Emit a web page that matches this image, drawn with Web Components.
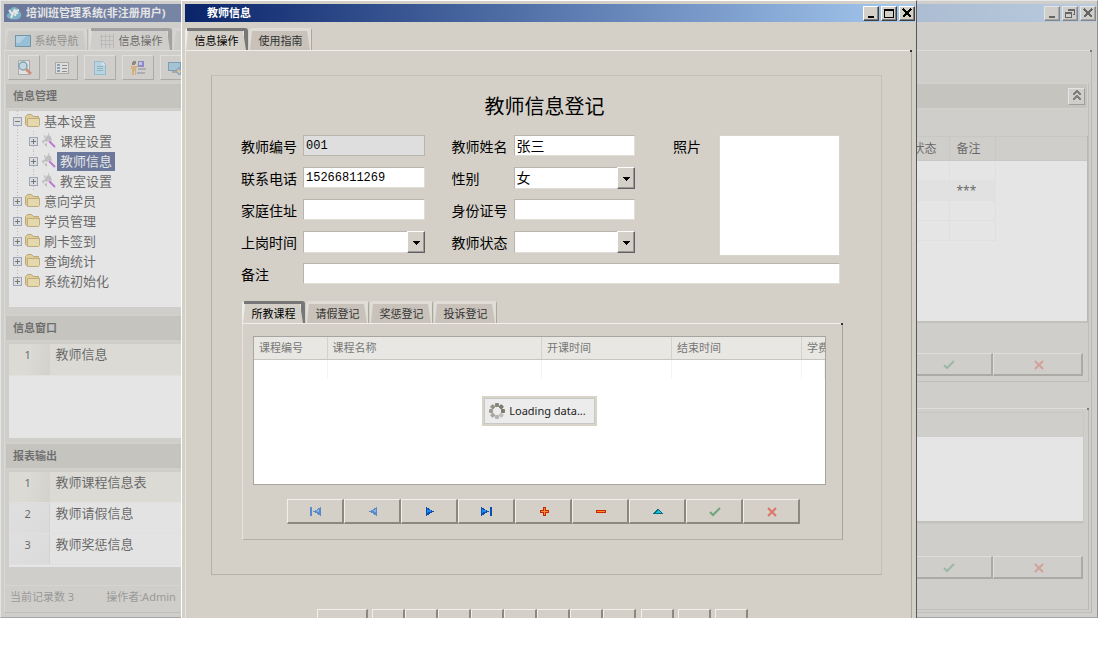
<!DOCTYPE html>
<html lang="zh-CN">
<head>
<meta charset="utf-8">
<title>培训班管理系统</title>
<style>
  body {
    margin: 0;
    background: #fff;
    color: #000;
    font: 11px/16px "Noto Sans", "Noto Sans CJK SC", sans-serif;
  }
</style>
</head>
<body>
<desk-top></desk-top>

<script>
const base = `
  * { box-sizing: border-box; }
  :host { display: block; box-sizing: border-box; }
  button, input, select { font: inherit; color: inherit; margin: 0; padding: 0; border-radius: 0; }
  button {
    display: flex;
    align-items: center;
    justify-content: center;
    background: #d4d0c8;
    border: 1px solid;
    border-color: #f2f0eb #8c8880 #8c8880 #f2f0eb;
  }
  table { border-collapse: collapse; table-layout: fixed; width: 100%; }
  th, td { padding: 0 6px; font-weight: normal; text-align: left; white-space: nowrap; overflow: hidden; }
`;

const define = (name, render) =>
  customElements.define(
    name,
    class extends HTMLElement {
      constructor() {
        super();
        this.attachShadow({ mode: "open" });
      }

      connectedCallback() {
        const [css, html] = render(this);
        this.shadowRoot.innerHTML = `<style>${base}${css}</style>${html}`;
      }
    }
  );

const icons = {
  first: `<g opacity=".6"><path fill="#0a5ec8" d="M2 4h2v9H2zM13 4v9L5 8.500z"/><path fill="#4fa3f5" d="M11 6v3L7 8z"/></g>`,
  prior: `<g opacity=".6"><path fill="#0a5ec8" d="M12 4v9L4 8.500z"/><path fill="#4fa3f5" d="M11 6v3L7 8z"/></g>`,
  next: `<path fill="#0a4fb0" d="M4 4v9l8-4.500z"/><path fill="#1e88f0" d="M5 6v4l5-2z"/>`,
  last: `<path fill="#0a4fb0" d="M2 4v9l8-4.500zM11 4h2v9h-2z"/><path fill="#1e88f0" d="M3 6v4l5-2z"/>`,
  add: `<path fill="#c82800" d="M7 4h3v3h3v3h-3v3H7v-3H4V7h3z"/><path fill="#ff8a30" d="M8 5h1v3h3v1H9v3H8V9H5V8h3z"/>`,
  remove: `<path fill="#c82800" d="M3 7h10v3H3z"/><path fill="#ff8a30" d="M4 8h8v1H4z"/>`,
  edit: `<path fill="#086a80" d="M8 5l5 6H3z"/><path fill="#18c4dc" d="M8 7l3 3H5z"/>`,
  post: `<path fill="none" stroke="#6da57c" stroke-width="2" d="M3 9l3 3 7-7"/>`,
  cancel: `<path fill="none" stroke="#dc7468" stroke-width="2" d="M4 5l8 8M12 5l-8 8"/>`,
  min: `<path d="M5 11h6v2H5z"/>`,
  max: `<path fill="none" stroke="#000" d="M3.500 4.500h9v8h-9z"/><path d="M3 4h10v2H3z"/>`,
  restore: `<path fill="none" stroke="#000" d="M6.500 6V4.500h6v5H11M3.500 7.500h6v5h-6z"/><path d="M6 4h7v2H6zM3 7h7v2H3z"/>`,
  close: `<path fill="none" stroke="#000" stroke-width="2" d="M4 4l8 8M12 4l-8 8"/>`,
  down: `<path d="M4 7h8l-4 4z"/>`,
  collapse: `<path fill="none" stroke="#333" stroke-width="1.500" d="M4 7l4-4 4 4M4 12l4-4 4 4"/>`,
  logo: `<path fill="#2c9bc0" d="M2 13q-3-3 1-5 0-5 5-6 4 0 5 4 4 3 1 7-5 3-12 0z"/><path fill="none" stroke="#fff" stroke-width="2" d="M3 5l3 4M9 4l-4 9M9 11l1-5 3-1M9 8h3"/>`,
  screen: `<path fill="#17607f" d="M0 2h16v12H0z"/><path fill="#62b4e0" d="M1 3h14v10H1z"/><path fill="#9cd4f0" d="M1 3h10L4 10H1z"/>`,
  mesh: `<path fill="none" stroke="#aaa6ac" d="M2.500 1v14M6.500 1v14M10.500 1v14M14.500 1v14M1 3.500h14M1 7.500h14M1 11.500h14"/>`,
  preview: `<path fill="#f6f6f6" stroke="#888" d="M2.500.500h11v14h-11z"/><path fill="#b9e2f5" stroke="#397c9c" stroke-width="1.500" d="M3 6a4 4 0 1 1 8 0a4 4 0 1 1-8 0"/><path stroke="#d05030" stroke-width="3" d="M10 9l5 5"/>`,
  form: `<path fill="#eee" stroke="#888" d="M1.500 2.500h13v11h-13z"/><path fill="#4b7795" d="M3 4h3v2H3zM3 7h3v2H3zM3 10h3v2H3z"/><path stroke="#555" d="M8 5.500h5M8 8.500h5M8 11.500h5"/>`,
  page: `<path fill="#a5daf2" stroke="#5faed2" d="M2.500 1.500h8l3 3v10h-11z"/><path fill="#fff" d="M10 2v3h3z"/><path stroke="#599fbd" d="M5 6.500h6M5 8.500h6M5 10.500h6"/>`,
  staff: `<circle cx="4" cy="3" r="2" fill="#5c4630"/><path fill="#d99a30" d="M1 6h5l2-2v2L6 9v6H5v-4H4v4H2V9H1z"/><path fill="#5b43c4" d="M8 1h6v6H8z"/><path fill="#a9c4ee" d="M9 2h3v3H9z"/><path fill="#8f8c98" d="M8 8h8v2H8zM7 12h8v2H7z"/>`,
  web: `<path fill="#376f92" d="M0 2h13v9H0z"/><path fill="#78bddd" d="M1 3h11v7H1z"/><path fill="#888" d="M4 11h6v2H4z"/><circle cx="12" cy="11" r="4" fill="#4d83c9"/><path fill="#e3b83f" d="M10 9l3 2-1 3-3-2z"/>`,
  folder: `<path fill="#efcf6a" stroke="#b0801c" d="M.500 11V3.500l2-2h4l2 2h5v9h-12z"/><path fill="#fbe68c" stroke="#b88a28" d="M2.500 13.500v-8h12v7l-1 1z"/>`,
  wand: `<path fill="#b0b0b6" d="M4 5l3-3 3 1-1 3-3 3-3-1zM1 7l3 1-2 3zM7 0l2 1-2 1zM3 2l2 1-2 2zM8 7l2-3 1 4zM3 11l3-1v4z"/><path stroke="#a42bd0" stroke-width="2" d="M8 8l6 6"/>`,
  plus: `<path fill="#e9edf3" stroke="#71809a" d="M.500.500h8v8h-8z"/><path stroke="#222" d="M2 4.500h5M4.500 2v5"/>`,
  minus: `<path fill="#e9edf3" stroke="#71809a" d="M.500.500h8v8h-8z"/><path stroke="#222" d="M2 4.500h5"/>`,
};

define("ui-icon", (el) => {
  const name = el.getAttribute("name");
  const small = name === "plus" || name === "minus";
  const size = small ? 9 : 16;
  const crisp = ["logo", "preview", "post", "cancel", "folder", "wand"].includes(name) ? "auto" : "crispEdges";
  return [
    `:host { flex: none; width: ${size}px; height: ${size}px; }
     svg { display: block; }`,
    `<svg width="${size}" height="${size}" viewBox="0 0 ${size} ${size}" shape-rendering="${crisp}">${icons[name]}</svg>`,
  ];
});

// raised frame with a gradient caption and system buttons
define("win-frame", (el) => [
  `
  :host { display: flex; flex-direction: column; background: #d4d0c8; padding: 3px 1px 4px 3px; border: 1px solid; border-color: #fff #55585e #7c7c7c #fff; }
  header {
    flex: none;
    display: flex;
    align-items: center;
    height: 18px;
    padding-left: 2px;
    gap: 2px;
    color: #fff;
    font-weight: bold;
    background: linear-gradient(to right, #0a246a, #a6caf0);
  }
  .text { flex: 1; padding-left: var(--caption-indent, 2px); white-space: nowrap; }
  button { width: 16px; height: 15px; border-color: #fff #404040 #404040 #fff; box-shadow: inset -1px -1px #808080; color: #000; }
  button ui-icon { width: 14px; height: 14px; margin: -2px 0 0 -2px; overflow: hidden; }
  .body { flex: 1; display: flex; flex-direction: column; padding: 6px 1px 0 0; min-height: 0; }
  `,
  `
  <header>
    <slot name="logo"></slot>
    <span class="text">${el.getAttribute("caption")}</span>
    <button aria-label="最小化"><ui-icon name="min"></ui-icon></button>
    <button aria-label="最大化"><ui-icon name="${el.getAttribute("size-icon")}"></ui-icon></button>
    <button aria-label="关闭"><ui-icon name="close"></ui-icon></button>
  </header>
  <div class="body"><slot></slot></div>
  `,
]);

define("tab-strip", () => [
  `:host { display: flex; gap: 1px; height: 22px; padding: 0 1px; }`,
  `<slot></slot>`,
]);

define("tab-item", (el) => [
  `
  :host { flex: none; width: 63px; height: 22px; }
  :host([wide]) { width: 83px; }
  button {
    width: 100%;
    height: 22px;
    padding: 3px 1px 0 1px;
    color: #333;
    border: 0;
    border-radius: 3px 3px 0 0;
    background: linear-gradient(to right, transparent 3px, #aaa6a0 0) right top / 4px 100% no-repeat, #e0ddd7;
  }
  :host([active]) button {
    color: #000;
    background: linear-gradient(#777, #777) right top / calc(100% - 2px) 3px no-repeat,
      linear-gradient(#777, #777) right top / 4px 100% no-repeat, #efede8;
  }
  span {
    display: flex;
    align-items: center;
    justify-content: center;
    gap: 4px;
    width: 100%;
    height: 19px;
    white-space: nowrap;
    background: #c8c2ba;
    clip-path: polygon(2px 0, calc(100% - 4px) 0, calc(100% - 1px) 100%, 0 100%);
  }
  :host([wide]) span { color: #555; background: #ccc8c0; }
  :host([active]) span { color: #000; background: #d4d0c8; }
  `,
  `<button role="tab" aria-selected="${el.hasAttribute("active")}"><span><slot></slot></span></button>`,
]);

define("tab-pane", () => [
  `
  :host { display: flex; flex-direction: column; border: 1px solid; border-color: #f0eee9 #a8a49c #b4b0a8 #e8e5df; position: relative; }
  :host::after { content: ""; position: absolute; right: -1px; top: -1px; width: 2px; height: 2px; background: #333; }
  `,
  `<slot></slot>`,
]);

define("section-head", () => [
  `
  :host {
    flex: none;
    display: flex;
    align-items: center;
    justify-content: space-between;
    height: 26px;
    padding: 0 2px 0 7px;
    background: #c0bcb2;
    border: 1px solid #dad7d0;
    color: #111;
  }
  `,
  `<b><slot></slot></b><slot name="end"></slot>`,
]);

define("tool-bar", () => [
  `
  :host { display: flex; gap: 6px; padding: 4px 3px 3px; }
  button { flex: none; width: 32px; height: 25px; }
  `,
  [["preview", "预览"], ["form", "表单"], ["page", "新建"], ["staff", "人员"], ["web", "网络"]]
    .map(([name, label]) => `<button aria-label="${label}"><ui-icon name="${name}"></ui-icon></button>`)
    .join(""),
]);

define("tree-view", () => {
  const nodes = [
    ["基本设置", 0, "minus"], ["课程设置", 1], ["教师信息", 1, "plus", "sel"], ["教室设置", 1],
    ["意向学员", 0], ["学员管理", 0], ["刷卡签到", 0], ["查询统计", 0], ["系统初始化", 0],
  ];
  return [
    `
    :host { flex: none; padding: 0 0 16px 4px; background: #fff; }
    ul {
      margin: 0;
      padding: 0;
      list-style: none;
      font-size: 13px;
      background: repeating-linear-gradient(#aaa 0 1px, transparent 1px 3px) 4px 0 / 1px 170px no-repeat;
    }
    li { display: flex; align-items: center; height: 20px; gap: 3px; }
    .sub { padding-left: 16px; background: repeating-linear-gradient(#aaa 0 1px, transparent 1px 3px) 20px 0 / 1px 100% no-repeat; }
    a { color: inherit; text-decoration: none; line-height: 19px; }
    .sub a { padding: 0 3px; margin-left: -3px; }
    .sel a { color: #fff; background: #0a246a; }
    `,
    `<ul>${nodes
      .map(
        ([text, level, box = "plus", sel = ""]) => `
        <li class="${level ? "sub" : ""} ${sel}">
          <ui-icon name="${box}"></ui-icon>
          <ui-icon name="${level ? "wand" : "folder"}"></ui-icon>
          <a href="#">${text}</a>
        </li>`
      )
      .join("")}</ul>`,
  ];
});

define("report-list", (el) => [
  `
  :host { background: #fff; padding-bottom: 2px; }
  td { height: 31px; font-size: 13px; border-bottom: 1px solid #f6f5f2; }
  td:first-child { width: 40px; padding: 0 2px 8px 0; text-align: center; font-size: 11px; background: linear-gradient(135deg, #f3f3f3, #e9e9e9); border-right: 1px solid #d8d8d8; }
  td + td { padding-bottom: 10px; background: #fafafa; }
  tr:first-child td { background: #eae8de; }
  tr:first-child td:first-child { background: linear-gradient(100deg, #eae8de 50%, #dad7cd); border-right-color: #dad7cd; }
  `,
  `<table><tbody>${el
    .getAttribute("items")
    .split(",")
    .map((text, i) => `<tr><td>${i + 1}</td><td>${text}</td></tr>`)
    .join("")}</tbody></table>`,
]);

define("nav-bar", (el) => [
  `
  :host { display: flex; }
  button { flex: none; width: var(--nav-width, 57px); height: var(--nav-height, 25px); padding-left: 2px; border-bottom-width: 2px; border-right-width: 2px; }
  `,
  el
    .getAttribute("actions")
    .split(" ")
    .map((name) => `<button aria-label="${name}"><ui-icon name="${name}"></ui-icon></button>`)
    .join(""),
]);

define("status-grid", () => [
  `
  :host { background: #fff; border-right: 1px solid #a8a49c; border-bottom: 2px solid #bab7b0; }
  th { height: 24px; padding-left: 7px; background: #d4d0c8; border: 1px solid #c6c2ba; border-right: 0; }
  td { height: 20px; padding-left: 7px; border: 1px solid #f4f4f4; }
  th, td { font-size: 12px; }
  tr:nth-child(2) td { background: #f7f7f7; }
  tbody td:last-child { border: 0; background: #fff; }
  `,
  `
  <table>
    <colgroup><col><col style="width:44px"><col style="width:46px"><col style="width:92px"></colgroup>
    <thead><tr><th></th><th>状态</th><th>备注</th><th></th></tr></thead>
    <tbody>
      <tr><td></td><td></td><td></td><td></td></tr>
      <tr><td></td><td></td><td>***</td><td></td></tr>
      <tr><td></td><td></td><td></td><td></td></tr>
      <tr><td></td><td></td><td></td><td></td></tr>
    </tbody>
  </table>
  `,
]);

define("main-window", () => [
  `
  :host { display: grid; }
  .work { flex: 1; margin-right: 3px; }
  .split { flex: 1; display: flex; min-height: 0; }
  .side { flex: none; width: 260px; display: flex; flex-direction: column; }
  tree-view { margin: 2px 0 8px 4px; }
  .side report-list { margin: 3px 0 5px 4px; }
  .windows { flex: 1; }
  .side .reports { margin-bottom: 18px; }
  .status { display: flex; gap: 32px; height: 27px; padding: 3px 5px; color: #666; border-top: 1px solid #e0ddd7; }
  .main { flex: 1; display: flex; flex-direction: column; margin-left: 6px; padding-right: 2px; --nav-width: 90px; --nav-height: 23px; }
  .main section { display: flex; flex-direction: column; border-right: 1px solid #b4b0a8; border-bottom: 1px solid #b4b0a8; }
  .main .top { height: 299px; }
  status-grid { margin-top: 27px; height: 187px; }
  nav-bar { justify-content: flex-end; margin-top: auto; padding: 0 5px 5px 0; }
  .collapse { width: 17px; height: 17px; border-color: #fff #707070 #707070 #fff; }
  .main tab-pane { flex: 1; margin: 26px 0 2px; padding-top: 4px; }
  .empty { height: 110px; margin-right: 5px; background: #fff; border-top: 24px solid #d4d0c8; border-bottom: 2px solid #bab7b0; outline: 1px solid #c8c4bc; }
  .main tab-pane nav-bar { margin-top: 33px; }
  `,
  `
  <win-frame caption="培训班管理系统(非注册用户)" size-icon="restore">
    <ui-icon slot="logo" name="logo"></ui-icon>
    <tab-strip>
      <tab-item wide><ui-icon name="screen"></ui-icon>系统导航</tab-item>
      <tab-item wide active><ui-icon name="mesh"></ui-icon>信息操作</tab-item>
      <tab-item wide></tab-item>
    </tab-strip>
    <tab-pane class="work">
      <tool-bar></tool-bar>
      <div class="split">
        <div class="side">
          <section-head>信息管理</section-head>
          <tree-view></tree-view>
          <section-head>信息窗口</section-head>
          <report-list class="windows" items="教师信息"></report-list>
          <section-head>报表输出</section-head>
          <report-list class="reports" items="教师课程信息表,教师请假信息,教师奖惩信息"></report-list>
          <div class="status"><span>当前记录数 3</span><span>操作者:Admin</span></div>
        </div>
        <div class="main">
          <section class="top">
            <section-head><button class="collapse" slot="end" aria-label="收起"><ui-icon name="collapse"></ui-icon></button></section-head>
            <status-grid></status-grid>
            <nav-bar actions="post cancel"></nav-bar>
          </section>
          <tab-pane>
            <div class="empty"></div>
            <nav-bar actions="post cancel"></nav-bar>
          </tab-pane>
        </div>
      </div>
    </tab-pane>
  </win-frame>
  `,
]);

define("form-field", (el) => {
  const type = el.getAttribute("type") || "text";
  const value = el.getAttribute("value") || "";
  const readonly = el.hasAttribute("readonly") ? "readonly" : "";
  const control =
    type === "select"
      ? `<div class="combo"><select id="c"><option>${value}</option></select><span class="drop"><ui-icon name="down"></ui-icon></span></div>`
      : type === "photo"
        ? `<div id="c" class="photo"></div>`
        : `<input id="c" value="${value}" ${readonly}>`;
  const label = el.getAttribute("label");
  return [
    `
    :host { display: grid; grid-template-columns: 62px 1fr; align-items: start; font-size: 14px; }
    :host([type="photo"]) { grid-template-columns: 46px 1fr; }
    label, .label { line-height: 20px; padding-top: 2px; white-space: nowrap; }
    input, select, .photo {
      width: 100%;
      min-width: 0;
      height: 21px;
      padding: 0 2px 1px;
      background: #fff;
      border: 1px solid;
      border-color: #b8b5ae #e0ddd6 #e0ddd6 #b8b5ae;
    }
    input { padding: 1px 2px 0; font-family: "Liberation Mono", "Noto Sans CJK SC", monospace; font-size: 12px; }
    input[data-cjk] { padding: 0 2px 1px; font-size: 14px; }
    input:read-only { background: #dedede; border-color: #b8b5ae; }
    .photo { height: 121px; border-color: #d8d5ce; }
    .combo { display: grid; grid-template-columns: 1fr 18px; }
    select { appearance: none; height: 22px; grid-area: 1 / 1 / 2 / 3; }
    .drop {
      grid-area: 1 / 2;
      pointer-events: none;
      display: flex;
      align-items: center;
      justify-content: center;
      background: #d4d0c8;
      border: 1px solid;
      border-color: #fff #606060 #606060 #fff;
      box-shadow: inset -1px -1px #999;
      z-index: 1;
    }
    `,
    type === "photo"
      ? `<span class="label">${label}</span>${control}`
      : `<label for="c">${label}</label>${/[\u4e00-\u9fff]/.test(value) ? control.replace("<input", "<input data-cjk") : control}`,
  ];
});

define("course-grid", () => [
  `
  :host { height: 149px; background: #fff; border: 1px solid #a8a59e; overflow: hidden; display: grid; }
  table { grid-area: 1 / 1; align-self: start; }
  th { height: 22px; padding: 0 5px; color: #777; background: #e8e7e3; border-bottom: 1px solid #c8c5be; border-right: 1px solid #d4d2cc; }
  td { height: 20px; border-right: 1px solid #f4f4f4; }
  th:last-child { text-overflow: clip; border-right: 0; padding-right: 0; }
  .loading {
    grid-area: 1 / 1;
    place-self: center;
    display: flex;
    align-items: center;
    gap: 4px;
    height: 30px;
    padding: 0 9px 0 5px;
    color: #222;
    background: #ececec;
    border: 2px solid #d9d4c8;
    box-shadow: inset 0 0 0 1px #c8c8c8;
  }
  `,
  `
  <table>
    <colgroup><col style="width:73px"><col><col style="width:130px"><col style="width:130px"><col style="width:23px"></colgroup>
    <thead><tr><th>课程编号</th><th>课程名称</th><th>开课时间</th><th>结束时间</th><th>学费</th></tr></thead>
    <tbody><tr><td></td><td></td><td></td><td></td><td></td></tr></tbody>
  </table>
  <div class="loading" role="status">
    <svg width="16" height="16" viewBox="0 0 16 16">
      ${[1, 0.4, 0.5, 0.6, 0.7, 0.8, 0.9, 1]
        .map((opacity, i) => `<rect x="12" y="6" width="4" height="4" rx="1" fill="#7c7a70" opacity="${opacity}" transform="rotate(${i * 45} 8 8)"/>`)
        .join("")}
    </svg>
    Loading data...
  </div>
  `,
]);

define("teacher-dialog", () => [
  `
  :host { display: grid; --caption-indent: 20px; }
  .page { padding: 24px 29px 26px 25px; margin-right: 2px; }
  .group { border: 1px solid #b4b1a9; border-right-color: #c4c0b8; border-top-color: #c4c0b8; padding-bottom: 34px; }
  h1 { margin: 0; padding: 17px 4px 14px 0; font-size: 20px; line-height: 28px; font-weight: normal; text-align: center; }
  form { display: flex; flex-wrap: wrap; padding: 0 41px 0 29px; }
  .fields { flex: 1; display: grid; grid-template-columns: 1fr 1fr; grid-auto-rows: 32px; column-gap: 27px; }
  .photo { flex: none; width: 167px; margin-left: 38px; }
  .remark { flex: 0 0 100%; height: 38px; }
  .detail { margin: 0 38px 0 30px; }
  tab-strip { padding: 0; }
  .detail tab-pane { padding: 12px 16px 15px 10px; }
  .detail nav-bar { padding: 14px 0 0 34px; }
  .keys { display: flex; padding: 34px 0 0 106px; }
  .keys button { flex: none; width: 33px; height: 24px; border-right-width: 2px; }
  .keys button:first-child { width: 51px; margin-right: 4px; }
  .keys button:nth-last-child(-n + 3) { margin-left: 5px; }
  .keys button:nth-last-child(-n + 2) { margin-left: 4px; }
  `,
  `
  <win-frame role="dialog" caption="教师信息" size-icon="max">
    <tab-strip>
      <tab-item active>信息操作</tab-item>
      <tab-item>使用指南</tab-item>
    </tab-strip>
    <tab-pane class="page">
      <div class="group">
        <h1>教师信息登记</h1>
        <form>
          <div class="fields">
            <form-field label="教师编号" value="001" readonly></form-field>
            <form-field label="教师姓名" value="张三"></form-field>
            <form-field label="联系电话" value="15266811269"></form-field>
            <form-field label="性别" type="select" value="女"></form-field>
            <form-field label="家庭住址"></form-field>
            <form-field label="身份证号"></form-field>
            <form-field label="上岗时间" type="select"></form-field>
            <form-field label="教师状态" type="select"></form-field>
          </div>
          <form-field class="photo" label="照片" type="photo"></form-field>
          <form-field class="remark" label="备注"></form-field>
        </form>
        <div class="detail">
          <tab-strip>
            <tab-item active>所教课程</tab-item>
            <tab-item>请假登记</tab-item>
            <tab-item>奖惩登记</tab-item>
            <tab-item>投诉登记</tab-item>
          </tab-strip>
          <tab-pane>
            <course-grid></course-grid>
            <nav-bar actions="first prior next last add remove edit post cancel"></nav-bar>
          </tab-pane>
        </div>
      </div>
      <div class="keys">${"<button aria-label='操作'></button>".repeat(12)}</div>
    </tab-pane>
  </win-frame>
  `,
]);

// the main window is greyed by a backdrop while the dialog is open
define("desk-top", () => [
  `
  :host { position: relative; display: grid; height: calc(100vh - 37px); min-height: 600px; overflow: hidden; }
  .backdrop { position: absolute; inset: 0; background: rgba(204, 204, 204, 0.5); }
  teacher-dialog { position: absolute; top: 0; left: 181px; right: 181px; }
  `,
  `
  <main-window></main-window>
  <div class="backdrop"></div>
  <teacher-dialog></teacher-dialog>
  `,
]);
</script>
</body>
</html>
